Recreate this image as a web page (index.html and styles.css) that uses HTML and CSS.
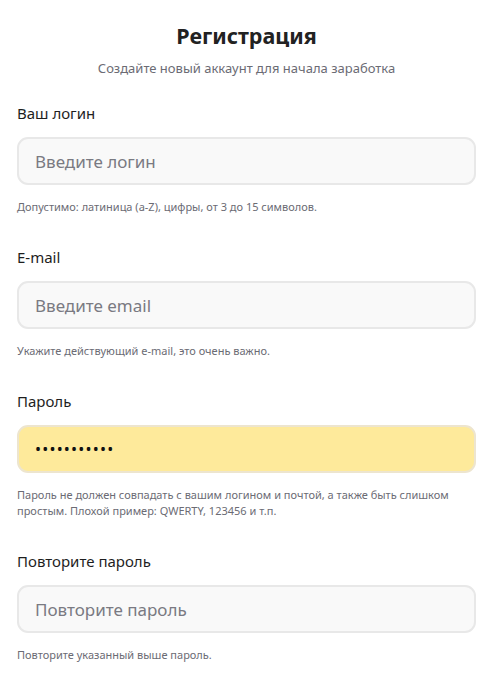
FILE: index.html
```html
<!DOCTYPE html>
<html lang="ru">
<head>
<meta charset="utf-8">
<link rel="stylesheet" href="styles.css">
</head>
<body>
<div class="page">
  <h1 class="title">Регистрация</h1>
  <p class="subtitle">Создайте новый аккаунт для начала заработка</p>

  <div class="field">
    <label class="label">Ваш логин</label>
    <div class="input"><span class="placeholder">Введите логин</span></div>
    <p class="hint">Допустимо: латиница (a-Z), цифры, от 3 до 15 символов.</p>
  </div>

  <div class="field">
    <label class="label">E-mail</label>
    <div class="input"><span class="placeholder">Введите email</span></div>
    <p class="hint">Укажите действующий e-mail, это очень важно.</p>
  </div>

  <div class="field">
    <label class="label">Пароль</label>
    <div class="input filled"><span class="dots">•••••••••••</span></div>
    <p class="hint">Пароль не должен совпадать с вашим логином и почтой, а также быть слишком простым. Плохой пример: QWERTY, 123456 и т.п.</p>
  </div>

  <div class="field">
    <label class="label">Повторите пароль</label>
    <div class="input"><span class="placeholder">Повторите пароль</span></div>
    <p class="hint">Повторите указанный выше пароль.</p>
  </div>
</div>
</body>
</html>
```

FILE: styles.css
```css
html, body {
  margin: 0;
  padding: 0;
  background: #ffffff;
}
body {
  font-family: "Noto Sans", "Open Sans", sans-serif;
  color: #222222;
}
.page {
  width: 459px;
  margin-left: 17px;
  padding-top: 21px;
}
.title {
  margin: 0;
  text-align: center;
  font-size: 21.5px;
  line-height: 30px;
  font-weight: 700;
  color: #222222;
}
.subtitle {
  margin: 8px 0 0;
  text-align: center;
  font-size: 13px;
  line-height: 18px;
  color: #6b6b74;
}
.field {
  display: flex;
  flex-direction: column;
}
.field:first-of-type {
  margin-top: 26px;
}
.label {
  font-size: 15px;
  line-height: 20px;
  font-weight: 400;
  color: #1e1e1e;
}
.input {
  margin-top: 14px;
  height: 48px;
  box-sizing: border-box;
  border: 2px solid #e8e8e8;
  border-radius: 11px;
  background: #f9f9f9;
  display: flex;
  align-items: center;
  padding-left: 16px;
}
.input.filled {
  background: #feea9b;
  border-color: #ede5cf;
}
.placeholder {
  font-size: 17px;
  color: #7a7a82;
}
.dots {
  font-size: 16px;
  letter-spacing: 1.2px;
  color: #111111;
}
.hint {
  margin: 14px 0 0;
  font-size: 11px;
  line-height: 16px;
  color: #6b6b74;
}
.field + .field {
  margin-top: 32px;
}
```
